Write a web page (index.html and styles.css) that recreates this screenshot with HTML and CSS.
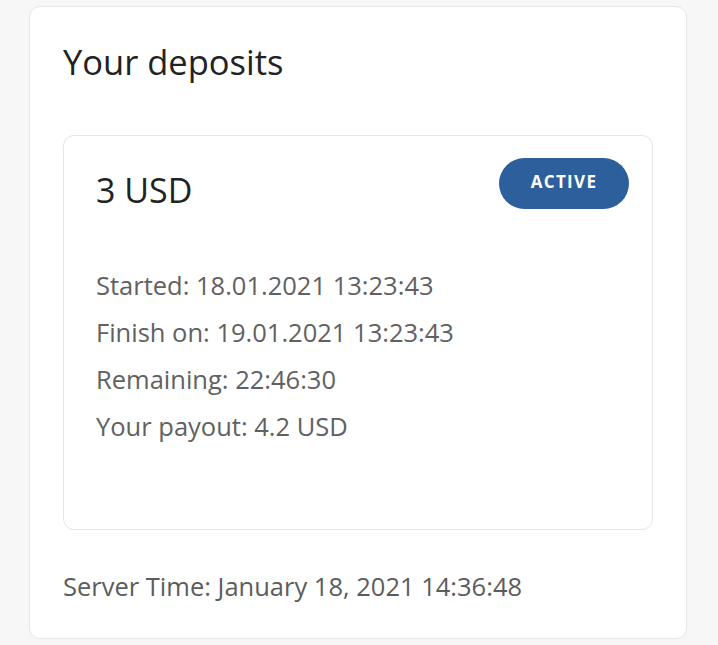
FILE: index.html
```html
<!DOCTYPE html>
<html lang="en">
<head>
<meta charset="utf-8">
<title>Your deposits</title>
<link rel="stylesheet" href="styles.css">
</head>
<body>
<section class="panel">
  <h1 class="panel-title">Your deposits</h1>
  <div class="deposit">
    <div class="deposit-head">
      <div class="deposit-amount">3 USD</div>
      <span class="badge">ACTIVE</span>
    </div>
    <ul class="deposit-info">
      <li>Started: 18.01.2021 13:23:43</li>
      <li>Finish on: 19.01.2021 13:23:43</li>
      <li>Remaining: 22:46:30</li>
      <li>Your payout: 4.2 USD</li>
    </ul>
  </div>
  <p class="server-time">Server Time: January 18, 2021 14:36:48</p>
</section>
</body>
</html>
```
FILE: styles.css
```css
* { box-sizing: border-box; }
html, body { margin: 0; padding: 0; }
body {
  background: #f7f7f7;
  font-family: "Open Sans", "Noto Sans", sans-serif;
  padding: 6px 0 0 29px;
}
.panel {
  width: 658px;
  height: 633px;
  background: #ffffff;
  border: 1.5px solid #e6e6e6;
  border-radius: 11px;
  padding: 35px 33px 0 33px;
}
.panel-title {
  margin: 0;
  font-size: 34.5px;
  line-height: 40px;
  font-weight: 400;
  color: #222222;
}
.deposit {
  margin-top: 53px;
  border: 1.5px solid #e6e6e6;
  border-radius: 11px;
  padding: 22px 23px 0 32px;
  height: 395px;
}
.deposit-head {
  display: flex;
  justify-content: space-between;
  align-items: flex-start;
}
.deposit-amount {
  margin-top: 12px;
  font-size: 34px;
  line-height: 40px;
  color: #222222;
}
.badge {
  display: inline-flex;
  align-items: center;
  justify-content: center;
  width: 130px;
  height: 51px;
  border-radius: 26px;
  background: #2c5f9b;
  color: #ffffff;
  font-weight: 700;
  font-size: 17px;
  letter-spacing: 1.3px;
  padding-bottom: 4px;
}
.deposit-info {
  list-style: none;
  margin: 52px 0 0 0;
  padding: 0;
  font-size: 25.5px;
  line-height: 47px;
  color: #616161;
}
.server-time {
  margin: 39px 0 0 0;
  font-size: 25.5px;
  line-height: 34px;
  color: #5c5c5c;
}
```
